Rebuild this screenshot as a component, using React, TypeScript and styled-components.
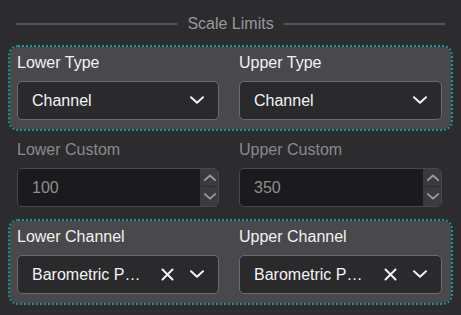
import styled, { createGlobalStyle } from "styled-components";

const GlobalStyle = createGlobalStyle`
  html, body {
    margin: 0;
    padding: 0;
    background: #2c2c2e;
  }
  body {
    font-family: "Liberation Sans", Arial, sans-serif;
    -webkit-font-smoothing: antialiased;
  }
`;

const Panel = styled.div`
  width: 461px;
  height: 315px;
  padding: 0 10px;
  box-sizing: border-box;
  background: #2c2c2e;
  overflow: hidden;
`;

const Divider = styled.div`
  display: flex;
  align-items: center;
  gap: 10px;
  height: 45px;
  box-sizing: border-box;
  padding: 3px 6px 0 6px;
  color: #98979c;
  font-size: 16px;

  &::before,
  &::after {
    content: "";
    flex: 1;
    height: 2px;
    background: #545357;
  }
`;

const Group = styled.div<{ $highlight?: boolean }>`
  display: grid;
  grid-template-columns: 202px 203px;
  column-gap: 20px;
  padding: 6px 7px 9px;
  margin: 2px 0 5px;
  border-radius: 8px;
  background: ${(p) => (p.$highlight ? "#49484c" : "transparent")};
  outline: ${(p) => (p.$highlight ? "2px dotted #139c9e" : "none")};
`;

const Field = styled.div`
  display: flex;
  flex-direction: column;
`;

const Label = styled.div<{ $disabled?: boolean }>`
  font-size: 16px;
  line-height: 20px;
  height: 28px;
  color: ${(p) => (p.$disabled ? "#8a898e" : "#f2f2f4")};
`;

const Select = styled.div`
  display: flex;
  align-items: center;
  height: 39px;
  box-sizing: border-box;
  padding: 0 14px 0 14px;
  border: 1px solid #6b6a6f;
  border-radius: 5px;
  background: #2a2a2d;
  color: #f4f4f6;
  font-size: 16px;
`;

const Value = styled.span`
  flex: 1;
  min-width: 0;
  white-space: nowrap;
  overflow: hidden;
  text-overflow: ellipsis;
`;

const Icons = styled.span`
  display: flex;
  align-items: center;
  gap: 16px;
  margin-left: 17px;
`;

const NumberBox = styled.div`
  display: flex;
  height: 39px;
  box-sizing: border-box;
  border: 1px solid #48474c;
  border-radius: 5px;
  overflow: hidden;
  background: #3a393d;
`;

const NumberValue = styled.div`
  flex: 1;
  display: flex;
  align-items: center;
  padding-left: 14px;
  background: #1b1b1d;
  color: #8f8e93;
  font-size: 16px;
`;

const Spinner = styled.div`
  width: 16px;
  margin-left: 2px;
  display: flex;
  flex-direction: column;
  gap: 1px;
  background: #2c2c2e;
`;

const SpinButton = styled.div<{ $grow: number }>`
  flex: ${(p) => p.$grow};
  display: flex;
  align-items: center;
  justify-content: center;
  background: #3b3a3e;
`;

const Chevron = ({ up, size = 14, color = "#f4f4f6" }: { up?: boolean; size?: number; color?: string }) => (
  <svg width={size} height={size * 0.6} viewBox="0 0 14 8" fill="none">
    <path
      d={up ? "M1 7L7 1.5L13 7" : "M1 1L7 6.5L13 1"}
      stroke={color}
      strokeWidth={up ? 2.2 : 2}
      strokeLinecap="round"
      strokeLinejoin="round"
    />
  </svg>
);

const Cross = () => (
  <svg width="13" height="13" viewBox="0 0 13 13" fill="none">
    <path d="M1.5 1.5L11.5 11.5M11.5 1.5L1.5 11.5" stroke="#f4f4f6" strokeWidth="2" strokeLinecap="round" />
  </svg>
);

function TypeSelect({ value }: { value: string }) {
  return (
    <Select>
      <Value>{value}</Value>
      <Chevron />
    </Select>
  );
}

function ChannelSelect({ value }: { value: string }) {
  return (
    <Select>
      <Value>{value}</Value>
      <Icons>
        <Cross />
        <Chevron />
      </Icons>
    </Select>
  );
}

function NumberInput({ value }: { value: string }) {
  return (
    <NumberBox>
      <NumberValue>{value}</NumberValue>
      <Spinner>
        <SpinButton $grow={17}>
          <Chevron up size={12} color="#9c9ba0" />
        </SpinButton>
        <SpinButton $grow={20}>
          <Chevron size={12} color="#9c9ba0" />
        </SpinButton>
      </Spinner>
    </NumberBox>
  );
}

export default function App() {
  return (
    <>
      <GlobalStyle />
      <Panel>
        <Divider>Scale Limits</Divider>
        <Group $highlight>
          <Field>
            <Label>Lower Type</Label>
            <TypeSelect value="Channel" />
          </Field>
          <Field>
            <Label>Upper Type</Label>
            <TypeSelect value="Channel" />
          </Field>
        </Group>
        <Group>
          <Field>
            <Label $disabled>Lower Custom</Label>
            <NumberInput value="100" />
          </Field>
          <Field>
            <Label $disabled>Upper Custom</Label>
            <NumberInput value="350" />
          </Field>
        </Group>
        <Group $highlight>
          <Field>
            <Label>Lower Channel</Label>
            <ChannelSelect value="Barometric Pressure" />
          </Field>
          <Field>
            <Label>Upper Channel</Label>
            <ChannelSelect value="Barometric Pressure" />
          </Field>
        </Group>
      </Panel>
    </>
  );
}
